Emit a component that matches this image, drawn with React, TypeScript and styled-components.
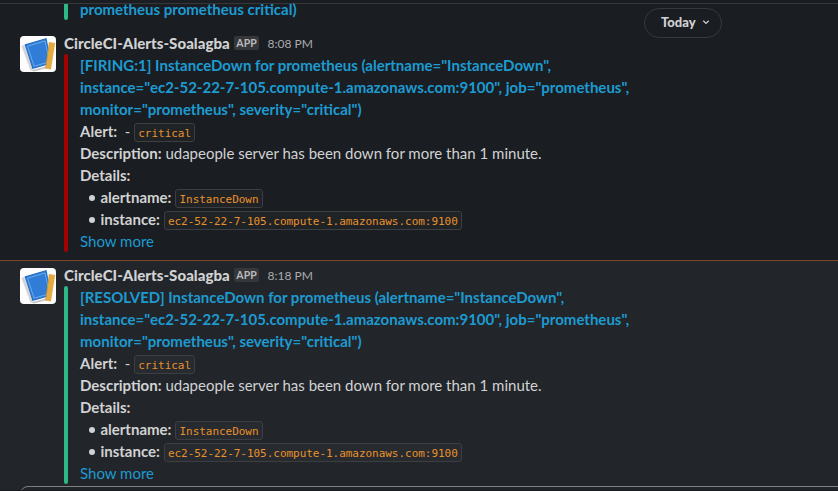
import React from "react";
import styled, { createGlobalStyle } from "styled-components";

const GlobalStyle = createGlobalStyle`
  * { box-sizing: border-box; }
  body {
    margin: 0;
    overflow: hidden;
    background: #1a1d21;
    color: #d1d2d3;
    font: 15px/22px Lato, sans-serif;
  }
`;

const Channel = styled.main`
  position: relative;
  display: flex;
  flex-direction: column;
  height: 491px;
  overflow: hidden;
`;

const TopEdge = styled.div`
  flex: none;
  height: 4px;
  border-bottom: 1px solid #35373b;
`;

const PreviousTail = styled.div`
  flex: none;
  display: flex;
  gap: 12px;
  height: 16px;
  margin-left: 64px;
`;

const DateButton = styled.button`
  position: absolute;
  top: 8px;
  left: 644px;
  display: flex;
  align-items: center;
  width: 78px;
  height: 30px;
  padding: 0 11px 2px 16px;
  justify-content: space-between;
  border: 1px solid #36393d;
  border-radius: 15px;
  background: #1a1d21;
  color: #d1d2d3;
  font: 900 13px/26px Lato, sans-serif;
`;

const MessageRow = styled.article<{ $highlight?: boolean }>`
  flex: none;
  display: flex;
  gap: 8px;
  height: ${(p) => (p.$highlight ? "231px" : "240px")};
  padding: ${(p) => (p.$highlight ? "3px" : "12px")} 20px 0;
  border-top: ${(p) => (p.$highlight ? "1px solid #7a452f" : "0")};
  background: ${(p) => (p.$highlight ? "#222529" : "transparent")};
`;

const Avatar = styled.svg`
  flex: none;
  width: 36px;
  height: 36px;
  margin-top: 4px;
  border-radius: 4px;
`;

const Body = styled.div`
  flex: 1;
  min-width: 0;
`;

const Header = styled.header`
  display: flex;
  align-items: center;
  height: 22px;
  white-space: nowrap;
`;

const Sender = styled.span`
  width: 166px;
  font-weight: 900;
  letter-spacing: 0.05px;
`;

const AppBadge = styled.span`
  width: 25px;
  height: 14px;
  margin: 0 8.5px 0 4px;
  border-radius: 2px;
  background: #35373b;
  color: #b9babd;
  font-size: 10.5px;
  font-weight: 700;
  line-height: 14px;
  text-align: center;
`;

const Time = styled.time`
  padding-top: 2px;
  color: #ababad;
  font-size: 12px;
`;

const Attachment = styled.section`
  display: flex;
  gap: 12px;
`;

const ColorBar = styled.div<{ $color: string; $tail?: boolean }>`
  flex: none;
  width: 4px;
  align-self: stretch;
  border-radius: ${(p) => (p.$tail ? "0 0 2px 2px" : "2px")};
  background: ${(p) => p.$color};
`;

const Content = styled.div`
  white-space: nowrap;
`;

const Line = styled.div`
  height: 22px;
`;

const Title = styled.div<{ $compact?: boolean }>`
  color: #1d9bd1;
  font-weight: 700;
  line-height: ${(p) => (p.$compact ? "10px" : "22px")};
`;

const Label = styled.b`
  font-weight: 700;
`;

const Code = styled.code`
  display: inline-block;
  height: 19px;
  padding: 2px 3px 0;
  border: 1px solid #3c3e42;
  border-radius: 3px;
  background: rgba(232, 232, 232, 0.03);
  color: #e8912d;
  font: 11px/15px "DejaVu Sans Mono", monospace;
  letter-spacing: -0.035px;
`;

const InlineRow = styled.div`
  display: flex;
  align-items: flex-start;
  height: 22px;
  white-space: pre;

  ${Code} {
    margin-top: 3px;
  }
`;

const Items = styled.ul`
  margin: 0;
  padding: 0 0 0 8px;
  list-style: none;
`;

const Item = styled.li`
  display: flex;
  align-items: center;
  height: 22px;

  &::before {
    content: "";
    width: 6px;
    height: 6px;
    margin: 1px 6px 0 1px;
    border-radius: 50%;
    background: #d1d2d3;
  }

  ${Label} {
    margin-left: -0.6px;
  }

  ${Code} {
    margin: 3px 0 0 4px;
  }
`;

const ShowMore = styled.a`
  display: block;
  height: 22px;
  color: #1d9bd1;
`;

const Composer = styled.div`
  position: absolute;
  top: 486px;
  left: 20px;
  right: -20px;
  height: 40px;
  border: 1px solid #808186;
  border-radius: 8px;
  background: #222529;
`;

const ComposerBand = styled.div`
  position: absolute;
  top: 490px;
  left: 0;
  right: 0;
  height: 1px;
  background: #1b1a20;
`;

function NotebookAvatar() {
  return (
    <Avatar viewBox="0 0 36 36">
      <rect width="36" height="36" fill="#fdfdfd" />
      <path d="M1.5 10 4 9 13 33.5 10.5 34.5Z" fill="#d3d4d8" />
      <path d="M11 34.5 27 30 27 32 14 35.5Z" fill="#c4c7cd" />
      <path d="M4.5 8.6 26.5 2 31.5 27.5 12.5 33Z" fill="#2467b8" />
      <path d="M5.4 9 26 2.9 30.8 27 13 32.1Z" fill="#2f7dd6" />
      <path d="M7.6 10.2 25 5 29.6 25.8 14 30.2Z" fill="none" stroke="#8abcf0" strokeWidth=".7" />
      <path d="M29.4 6 35.2 7 31 33.6 25.6 32.6Z" fill="#e5ab42" />
      <path d="M29.4 6 25.6 32.6" stroke="#c9912f" strokeWidth=".7" />
    </Avatar>
  );
}

interface AlertProps {
  status: string;
  time: string;
  color: string;
  highlight?: boolean;
}

function AlertMessage({ status, time, color, highlight }: AlertProps) {
  return (
    <MessageRow $highlight={highlight}>
      <NotebookAvatar />
      <Body>
        <Header>
          <Sender>CircleCI-Alerts-Soalagba</Sender>
          <AppBadge>APP</AppBadge>
          <Time>{time}</Time>
        </Header>
        <Attachment>
          <ColorBar $color={color} />
          <Content>
            <Title>
              <Line>[{status}] InstanceDown for prometheus (alertname="InstanceDown",</Line>
              <Line>instance="ec2-52-22-7-105.compute-1.amazonaws.com:9100", job="prometheus",</Line>
              <Line>monitor="prometheus", severity="critical")</Line>
            </Title>
            <InlineRow>
              <Label>Alert:</Label>
              <span>{"\u00a0 - "}</span>
              <Code>critical</Code>
            </InlineRow>
            <Line>
              <Label>Description:</Label> udapeople server has been down for more than 1 minute.
            </Line>
            <Line>
              <Label>Details:</Label>
            </Line>
            <Items>
              <Item>
                <Label>alertname:</Label>
                <Code>InstanceDown</Code>
              </Item>
              <Item>
                <Label>instance:</Label>
                <Code>ec2-52-22-7-105.compute-1.amazonaws.com:9100</Code>
              </Item>
            </Items>
            <ShowMore>Show more</ShowMore>
          </Content>
        </Attachment>
      </Body>
    </MessageRow>
  );
}

export default function App() {
  return (
    <>
      <GlobalStyle />
      <Channel>
        <TopEdge />
        <PreviousTail>
          <ColorBar $color="#2eb886" $tail />
          <Title $compact>prometheus prometheus critical)</Title>
        </PreviousTail>
        <AlertMessage status="FIRING:1" time="8:08 PM" color="#a30200" />
        <AlertMessage status="RESOLVED" time="8:18 PM" color="#2eb886" highlight />
        <DateButton>
          Today
          <svg width="8" height="8" viewBox="0 0 8 8" fill="none" stroke="#d1d2d3" strokeWidth="1.2">
            <path d="M1.3 2.8 4 5.4 6.7 2.8" />
          </svg>
        </DateButton>
        <Composer />
        <ComposerBand />
      </Channel>
    </>
  );
}
